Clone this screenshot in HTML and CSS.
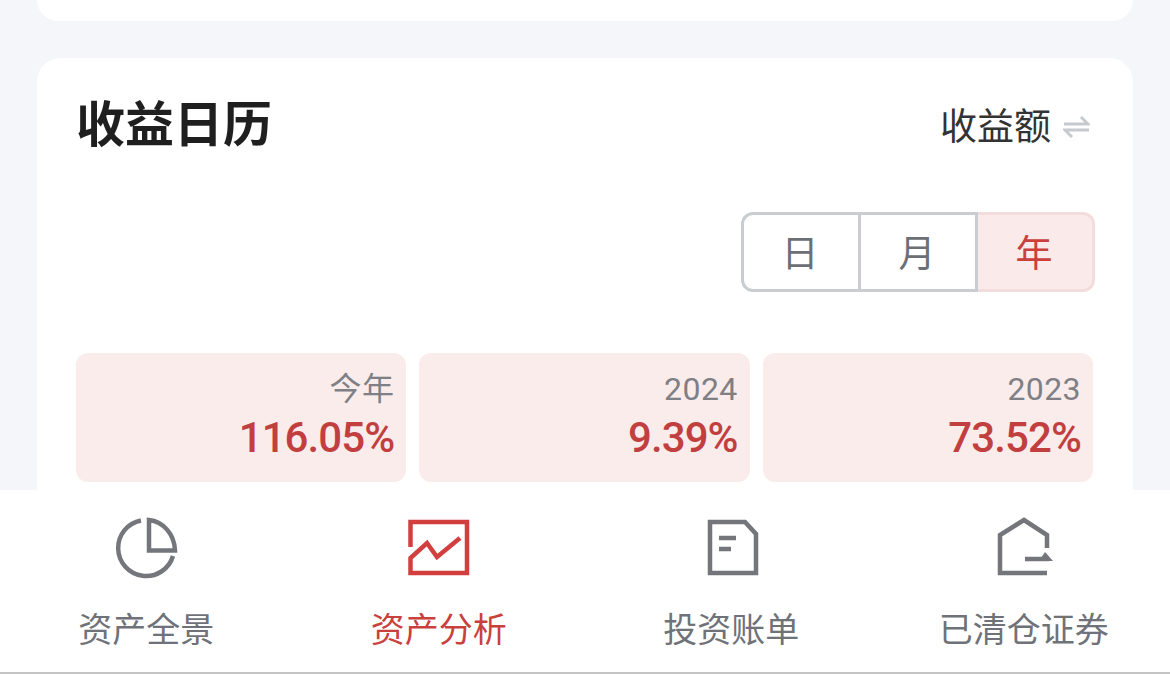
FILE: index.html
```html
<!DOCTYPE html>
<html lang="zh-CN">
<head>
<meta charset="utf-8">
<title>收益日历</title>
<link rel="stylesheet" href="styles.css">
</head>
<body>
<div class="page">
  <main class="content">
    <div class="card-prev"></div>
    <section class="card">
      <header class="card-head">
        <h1 class="title">收益日历</h1>
        <div class="metric">
          <span>收益额</span>
          <svg class="swap" viewBox="0 0 27 24" width="27" height="24" fill="none" stroke="#c6cacf" stroke-width="3">
            <path d="M1 10H25L18 3"/>
            <path d="M26 16H2L9 23"/>
          </svg>
        </div>
      </header>
      <div class="toggle-row">
        <div class="toggle">
          <div class="seg seg-first">日</div>
          <div class="seg">月</div>
          <div class="seg seg-on">年</div>
        </div>
      </div>
      <div class="stats">
        <div class="stat"><div class="stat-label">今年</div><div class="stat-value">116.05%</div></div>
        <div class="stat"><div class="stat-label">2024</div><div class="stat-value">9.39%</div></div>
        <div class="stat"><div class="stat-label">2023</div><div class="stat-value">73.52%</div></div>
      </div>
    </section>
  </main>
  <nav class="tabs">
    <div class="tab">
      <svg class="tab-icon" viewBox="0 0 64 64" fill="none" stroke="#74767c" stroke-width="4.500">
        <path d="M27 4.500A28 28 0 1 0 59 40"/>
        <path d="M35 4V34.500H61C60.500 18 49 5.500 35 4Z"/>
      </svg>
      <span class="tab-text">资产全景</span>
    </div>
    <div class="tab tab-on">
      <svg class="tab-icon" viewBox="0 0 64 64" fill="none" stroke="#d23f3f" stroke-width="4.500">
        <path d="M3.500 31V6H60V57H3.500V42L20 27L30 41L53 22"/>
      </svg>
      <span class="tab-text">资产分析</span>
    </div>
    <div class="tab">
      <svg class="tab-icon" viewBox="0 0 64 64" fill="none" stroke="#74767c" stroke-width="4.500">
        <path d="M11 6H46L57 18V57H11Z"/>
        <path d="M20 22H37M20 33H32"/>
      </svg>
      <span class="tab-text">投资账单</span>
    </div>
    <div class="tab">
      <svg class="tab-icon" viewBox="0 0 64 64" fill="none" stroke="#74767c" stroke-width="4.500">
        <path d="M55 57H8V19L32 4L55 19V32"/>
        <path d="M33 43H57"/>
        <path d="M53 36L61 45H47Z" fill="#74767c" stroke="none"/>
      </svg>
      <span class="tab-text">已清仓证券</span>
    </div>
  </nav>
  <div class="edge"></div>
</div>
</body>
</html>
```
FILE: styles.css
```css
* { box-sizing: border-box; margin: 0; padding: 0; }
html, body { height: 100%; overflow: hidden; }
body { background: #f4f6f9; font-family: "Noto Sans CJK SC", "Noto Sans", sans-serif; }
.page { height: 674px; display: flex; flex-direction: column; }
.content { flex: 1; min-height: 0; overflow: hidden; padding: 0 37px; display: flex; flex-direction: column; gap: 37px; }
.card-prev { flex: none; height: 21px; background: #fff; border-radius: 0 0 24px 24px; }
.card { flex: none; height: 460px; background: #fff; border-radius: 24px 24px 0 0; padding: 0 40px 0 39px; }
.card-head { height: 132px; display: flex; justify-content: space-between; align-items: center; }
.title { font-size: 49px; line-height: 60px; font-weight: 700; color: #1f1f1f; margin-bottom: 6px; }
.metric { display: flex; align-items: center; gap: 12px; font-size: 37px; line-height: 50px; color: #333; margin-right: 3px; }
.swap { display: block; margin-top: 3px; }
.toggle-row { display: flex; justify-content: flex-end; margin-top: 22px; margin-right: -2px; }
.toggle { display: flex; width: 354px; height: 80px; }
.seg { flex: 1 1 0; display: flex; align-items: center; justify-content: center; font-size: 37px; padding-bottom: 2px; padding-right: 2px; color: #6c7076; border: 3px solid #c9ccd0; border-left: 0; }
.seg-first { border-left: 3px solid #c9ccd0; border-radius: 12px 0 0 12px; }
.seg-on { background: #faeaea; color: #c9403d; border: 3px solid #f3dcdc; border-left: 0; border-radius: 0 12px 12px 0; }
.stats { display: grid; grid-template-columns: repeat(3, 1fr); gap: 13px; margin-top: 61px; }
.stat { height: 129px; background: #fbecec; border-radius: 12px; padding: 16px 12px 0; text-align: right; }
.stat-label { font-size: 32px; line-height: 40px; letter-spacing: 0.4px; color: #7e8085; font-family: Roboto, "Noto Sans CJK SC", sans-serif; }
.stat-value { font-size: 42px; line-height: 52px; margin-top: 3px; letter-spacing: -0.9px; font-weight: 500; color: #c23f3f; font-family: Roboto, "Noto Sans CJK SC", sans-serif; }
.tabs { flex: none; height: 182px; background: #fff; display: grid; grid-template-columns: repeat(4, 1fr); }
.tab { display: flex; flex-direction: column; align-items: center; padding-top: 26px; color: #6f7278; }
.tab-icon { width: 64px; height: 64px; display: block; }
.tab-text { font-size: 34px; line-height: 46px; margin-top: 25px; }
.tab-on { color: #c9403d; }
.edge { flex: none; height: 2px; background: #c4c4c4; }
```
